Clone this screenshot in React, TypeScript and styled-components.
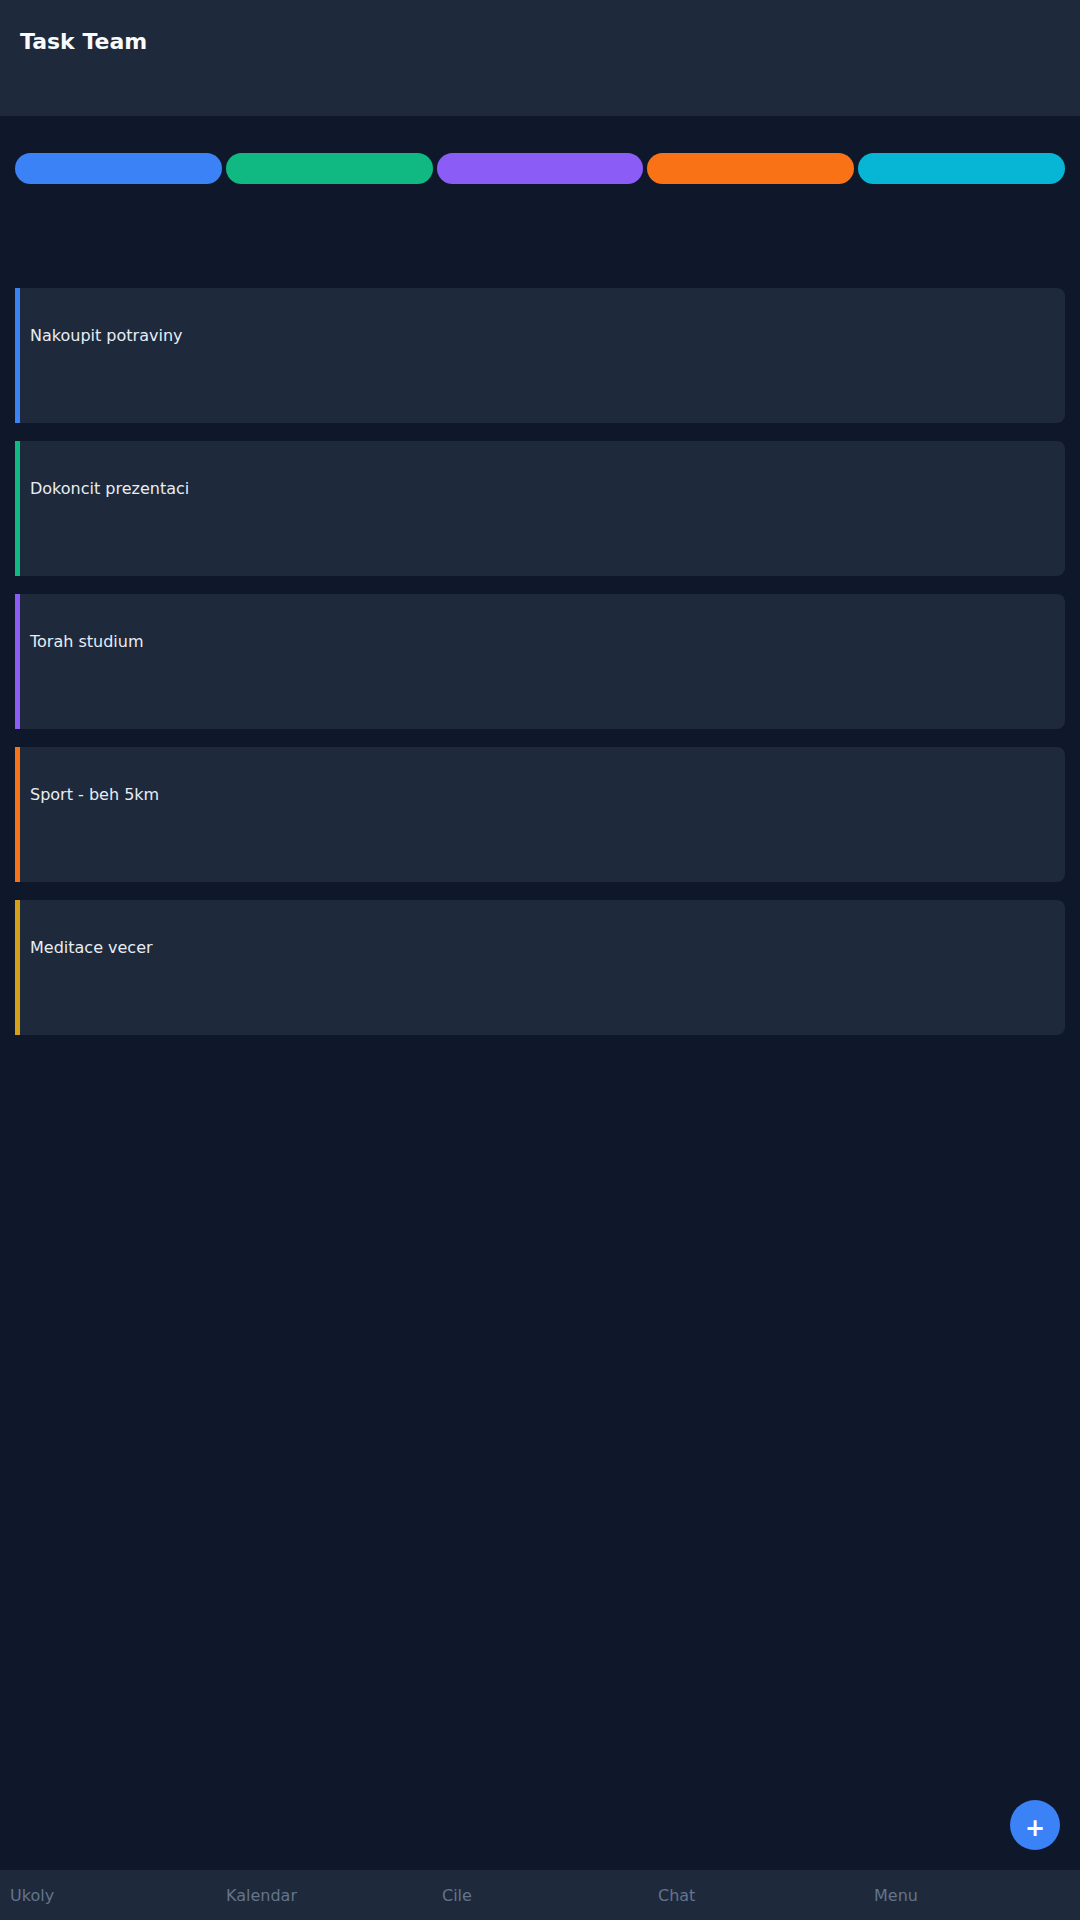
import React from "react";
import styled, { createGlobalStyle } from "styled-components";

const GlobalStyle = createGlobalStyle`
  html, body {
    margin: 0;
    padding: 0;
    background: #0f172a;
  }
  body {
    font-family: "DejaVu Sans", "Noto Sans", sans-serif;
    color: #e2e8f0;
  }
  * { box-sizing: border-box; }
`;

const Screen = styled.div`
  position: relative;
  width: 1080px;
  height: 1920px;
  background: #0f172a;
  display: flex;
  flex-direction: column;
  overflow: hidden;
`;

const Header = styled.header`
  height: 116px;
  background: #1e293b;
  padding: 28px 20px 0;
`;

const Title = styled.h1`
  margin: 0;
  font-family: "DejaVu Sans", sans-serif;
  font-weight: 700;
  font-size: 22px;
  line-height: 28px;
  color: #f8fafc;
`;

const Main = styled.main`
  flex: 1;
  padding: 37px 15px 0;
  display: flex;
  flex-direction: column;
`;

const PillRow = styled.div`
  display: flex;
  gap: 4px;
  height: 31px;
`;

const Pill = styled.div<{ $color: string }>`
  flex: 1;
  border-radius: 999px;
  background: ${(p) => p.$color};
`;

const TaskList = styled.div`
  margin-top: 104px;
  display: flex;
  flex-direction: column;
  gap: 18px;
`;

const TaskCard = styled.div<{ $accent: string }>`
  height: 135px;
  background: #1e293b;
  border-left: 5px solid ${(p) => p.$accent};
  border-radius: 0 8px 8px 0;
  padding: 38px 10px 0;
`;

const TaskTitle = styled.div`
  font-size: 16px;
  line-height: 19px;
  color: #e8edf3;
`;

const Fab = styled.button`
  position: absolute;
  right: 20px;
  bottom: 70px;
  width: 50px;
  height: 50px;
  border-radius: 50%;
  border: none;
  background: #3b82f6;
  color: #ffffff;
  font-family: "DejaVu Sans", sans-serif;
  font-weight: 700;
  font-size: 24px;
  line-height: 1;
  padding: 6px 0 0;
  display: flex;
  align-items: center;
  justify-content: center;
`;

const BottomNav = styled.nav`
  height: 50px;
  background: #1e293b;
  display: grid;
  grid-template-columns: repeat(5, 1fr);
  align-items: center;
`;

const NavItem = styled.div`
  padding-left: 10px;
  font-size: 16px;
  color: #64748b;
`;

const pills = ["#3b82f6", "#10b981", "#8b5cf6", "#f97316", "#06b6d4"];

const tasks = [
  { title: "Nakoupit potraviny", accent: "#3b82f6" },
  { title: "Dokoncit prezentaci", accent: "#10b981" },
  { title: "Torah studium", accent: "#8b5cf6" },
  { title: "Sport - beh 5km", accent: "#f97316" },
  { title: "Meditace vecer", accent: "#d4a017" },
];

const navItems = ["Ukoly", "Kalendar", "Cile", "Chat", "Menu"];

export default function App() {
  return (
    <>
      <GlobalStyle />
      <Screen>
        <Header>
          <Title>Task Team</Title>
        </Header>
        <Main>
          <PillRow>
            {pills.map((c) => (
              <Pill key={c} $color={c} />
            ))}
          </PillRow>
          <TaskList>
            {tasks.map((t) => (
              <TaskCard key={t.title} $accent={t.accent}>
                <TaskTitle>{t.title}</TaskTitle>
              </TaskCard>
            ))}
          </TaskList>
        </Main>
        <Fab>+</Fab>
        <BottomNav>
          {navItems.map((n) => (
            <NavItem key={n}>{n}</NavItem>
          ))}
        </BottomNav>
      </Screen>
    </>
  );
}
